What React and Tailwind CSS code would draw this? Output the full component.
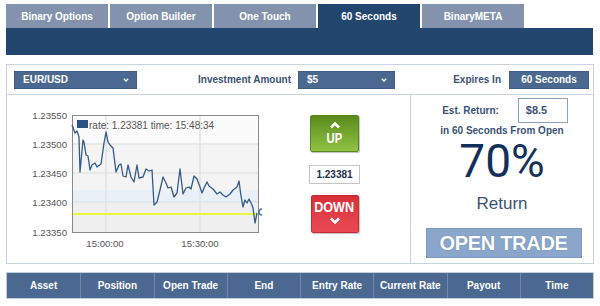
import React from 'react'

const tabs = ['Binary Options', 'Option Builder', 'One Touch', '60 Seconds', 'BinaryMETA']
const cols = ['Asset', 'Position', 'Open Trade', 'End', 'Entry Rate', 'Current Rate', 'Payout', 'Time']

// chart points in page coordinates
const pts = [
  [72, 125], [75, 133], [77, 131], [79, 137], [80, 172], [83, 140], [84, 142], [86, 155], [88, 156],
  [90, 170], [92, 165], [95, 163], [97, 167], [101, 164], [104, 143], [106, 132], [108, 142], [110, 145],
  [113, 148], [116, 172], [119, 165], [121, 164], [123, 176], [126, 177], [128, 165], [131, 177],
  [134, 182], [137, 165], [139, 178], [143, 177], [146, 169], [149, 171], [152, 170], [154, 205],
  [157, 202], [160, 190], [163, 177], [166, 183], [168, 188], [171, 187], [174, 197], [177, 193],
  [180, 169], [183, 194], [186, 188], [189, 187], [191, 189], [194, 176], [197, 179], [200, 187],
  [202, 193], [204, 188], [207, 182], [209, 186], [213, 189], [217, 194], [220, 192], [223, 195],
  [226, 197], [230, 194], [233, 190], [237, 187], [239, 181], [241, 196], [243, 207], [245, 200],
  [247, 203], [249, 199], [252, 205], [253, 208], [255, 223], [257, 213],
]

const yLabels = [
  ['1.23550', 115], ['1.23500', 144], ['1.23450', 173], ['1.23400', 202], ['1.23350', 232],
]

function Chevron({ down }) {
  return (
    <svg width="12" height="8" viewBox="0 0 12 8" className="block shrink-0">
      <path d={down ? 'M2 1.5 L6 5.5 L10 1.5' : 'M2 6.5 L6 2.5 L10 6.5'} stroke="#ffffff" strokeWidth="2.6" fill="none" />
    </svg>
  )
}

function Select({ label, width }) {
  return (
    <div className={`${width} h-[18px] bg-[#4b6990] border border-[#3f5c82] flex items-center justify-between pl-[8px] pr-[7px] text-white font-bold text-[10px]`}>
      <span>{label}</span>
      <svg width="6" height="4" viewBox="0 0 6 4">
        <path d="M0.8 0.8 L3 3 L5.2 0.8" stroke="#fff" strokeWidth="1.3" fill="none" />
      </svg>
    </div>
  )
}

function Chart() {
  return (
    <svg width="245" height="150" viewBox="20 105 245 150" className="shrink-0">
      <rect x="72" y="115" width="186" height="117" fill="#fbfbfb" />
      <rect x="72" y="143" width="186" height="47" fill="#f4f4f4" />
      <rect x="72" y="190" width="186" height="12" fill="#eaf0f8" />
      <rect x="72" y="202" width="186" height="30" fill="#efefef" />
      {yLabels.slice(1, 4).map(([, y]) => (
        <line key={y} x1="72" x2="258" y1={y} y2={y} stroke="#dcdcdc" strokeWidth="1" />
      ))}
      <line x1="106" x2="106" y1="115" y2="232" stroke="#e2e2e2" strokeWidth="1.5" />
      <line x1="200" x2="200" y1="115" y2="232" stroke="#e2e2e2" strokeWidth="1.5" />
      <line x1="72" x2="258" y1="214" y2="214" stroke="#eaf53c" strokeWidth="2" />
      <rect x="72.5" y="115.5" width="186" height="117" fill="none" stroke="#8a8a8a" strokeWidth="1" />
      <polyline
        points={pts.map((p) => p.join(',')).join(' ')}
        fill="none"
        stroke="#345a88"
        strokeWidth="1.3"
        strokeLinejoin="round"
      />
      <path d="M262 209 A3 3 0 1 0 262 215" stroke="#4a72a0" strokeWidth="1.5" fill="none" />
      <rect x="77" y="120" width="11" height="8" fill="#2b5283" />
      <text x="89" y="128.5" fontSize="10" fill="#555" fontFamily="'Liberation Sans', sans-serif">
        rate: 1.23381 time: 15:48:34
      </text>
      {yLabels.map(([t, y]) => (
        <text key={t} x="67" y={y + 3.5} fontSize="9.6" fill="#555" textAnchor="end" fontFamily="'Liberation Sans', sans-serif">
          {t}
        </text>
      ))}
      <text x="105" y="246.5" fontSize="9.6" fill="#555" textAnchor="middle" fontFamily="'Liberation Sans', sans-serif">15:00:00</text>
      <text x="200" y="246.5" fontSize="9.6" fill="#555" textAnchor="middle" fontFamily="'Liberation Sans', sans-serif">15:30:00</text>
    </svg>
  )
}

export default function App() {
  return (
    <div className="w-[600px] h-[306px] bg-white pt-[4px] px-[6px] font-['Liberation_Sans',sans-serif] overflow-hidden">
      {/* tabs */}
      <div className="flex gap-[2px] h-[24px]">
        {tabs.map((t) => (
          <div
            key={t}
            className={`w-[102px] flex items-center justify-center text-white font-bold text-[10px] ${
              t === '60 Seconds' ? 'bg-[#23466f]' : 'bg-[#8393ad]'
            }`}
          >
            {t}
          </div>
        ))}
      </div>
      <div className="h-[27px] w-[587px] bg-[#23466f]" />

      {/* trade panel */}
      <div className="mt-[9px] border border-[#c9d3df]">
        <div className="h-[30px] border-b border-[#c9d3df] flex items-center pl-[7px] pr-[4px]">
          <Select label="EUR/USD" width="w-[123px]" />
          <div className="w-[161px] text-right pr-[7px] text-[10px] font-bold text-[#3b5275]">Investment Amount</div>
          <Select label="$5" width="w-[97px]" />
          <div className="ml-auto flex items-center">
            <span className="text-[10px] font-bold text-[#3b5275] mr-[8px]">Expires In</span>
            <div className="w-[80px] h-[18px] bg-[#4b6990] border border-[#3f5c82] flex items-center justify-center text-white font-bold text-[10px]">
              60 Seconds
            </div>
          </div>
        </div>

        <div className="flex h-[168px]">
          <div className="w-[404px] border-r border-[#c9d3df] flex">
            <div className="ml-[13px] mt-[10px]">
              <Chart />
            </div>
            <div className="ml-[44px] pt-[20px] w-[51px] flex flex-col items-center">
              <div className="w-[49px] h-[37px] rounded-[2px] border border-[#5a8a1f] bg-linear-to-b from-[#5a8b1a] to-[#90c243] flex flex-col items-center pt-[5px] shadow-[1px_1px_1px_rgba(0,0,0,0.25)]">
                <Chevron />
                <span className="mt-[2px] inline-block scale-x-[0.75] text-white font-bold text-[15px] leading-[13px]">UP</span>
              </div>
              <div className="mt-[13px] w-[51px] h-[19px] border border-[#c4c4c4] flex items-center justify-center text-[10px] font-bold text-[#1c2f4c]">
                1.23381
              </div>
              <div className="mt-[11px] w-[48px] h-[38px] rounded-[2px] border border-[#c92a33] bg-linear-to-b from-[#d92e38] to-[#ea4a55] flex flex-col items-center pt-[5px] shadow-[1px_1px_1px_rgba(0,0,0,0.25)]">
                <span className="inline-block scale-x-[0.9] text-white font-bold text-[14px] leading-[13px]">DOWN</span>
                <div className="mt-[3px]">
                  <Chevron down />
                </div>
              </div>
            </div>
          </div>

          <div className="flex-1 flex flex-col items-center pt-[3px]">
            <div className="flex items-center ml-[6px]">
              <span className="text-[10px] font-bold text-[#3b5275]">Est. Return:</span>
              <div className="ml-[19px] w-[50px] h-[25px] border border-[#8ba1bf] flex items-center pl-[7px] text-[11px] font-bold text-[#3b5275]">
                $8.5
              </div>
            </div>
            <div className="mt-[2px] text-[10px] leading-[12px] font-bold text-[#3b5275]">in 60 Seconds From Open</div>
            <div className="mt-[5px] font-['Roboto',sans-serif] text-[46px] leading-[38px] text-[#13305a]">70%</div>
            <div className="mt-[14px] text-[17px] leading-[20px] text-[#3b5275]">Return</div>
            <div className="mt-[14px] ml-[3px] w-[156px] h-[30px] bg-[#8aa6cb] border border-[#7d99c0] flex items-center justify-center text-white font-bold text-[20px] tracking-[-0.3px] [text-shadow:0_0_1px_rgba(60,80,120,0.5)]">
              OPEN TRADE
            </div>
          </div>
        </div>
      </div>

      {/* positions table header */}
      <div className="mt-[8px] border border-[#c5cdd8] grid grid-cols-8 bg-[#4a6890] h-[27px]">
        {cols.map((c, i) => (
          <div
            key={c}
            className={`flex items-center justify-center text-white font-bold text-[10px] ${
              i > 0 ? 'border-l border-[#6f88a8]' : ''
            }`}
          >
            {c}
          </div>
        ))}
      </div>
    </div>
  )
}
